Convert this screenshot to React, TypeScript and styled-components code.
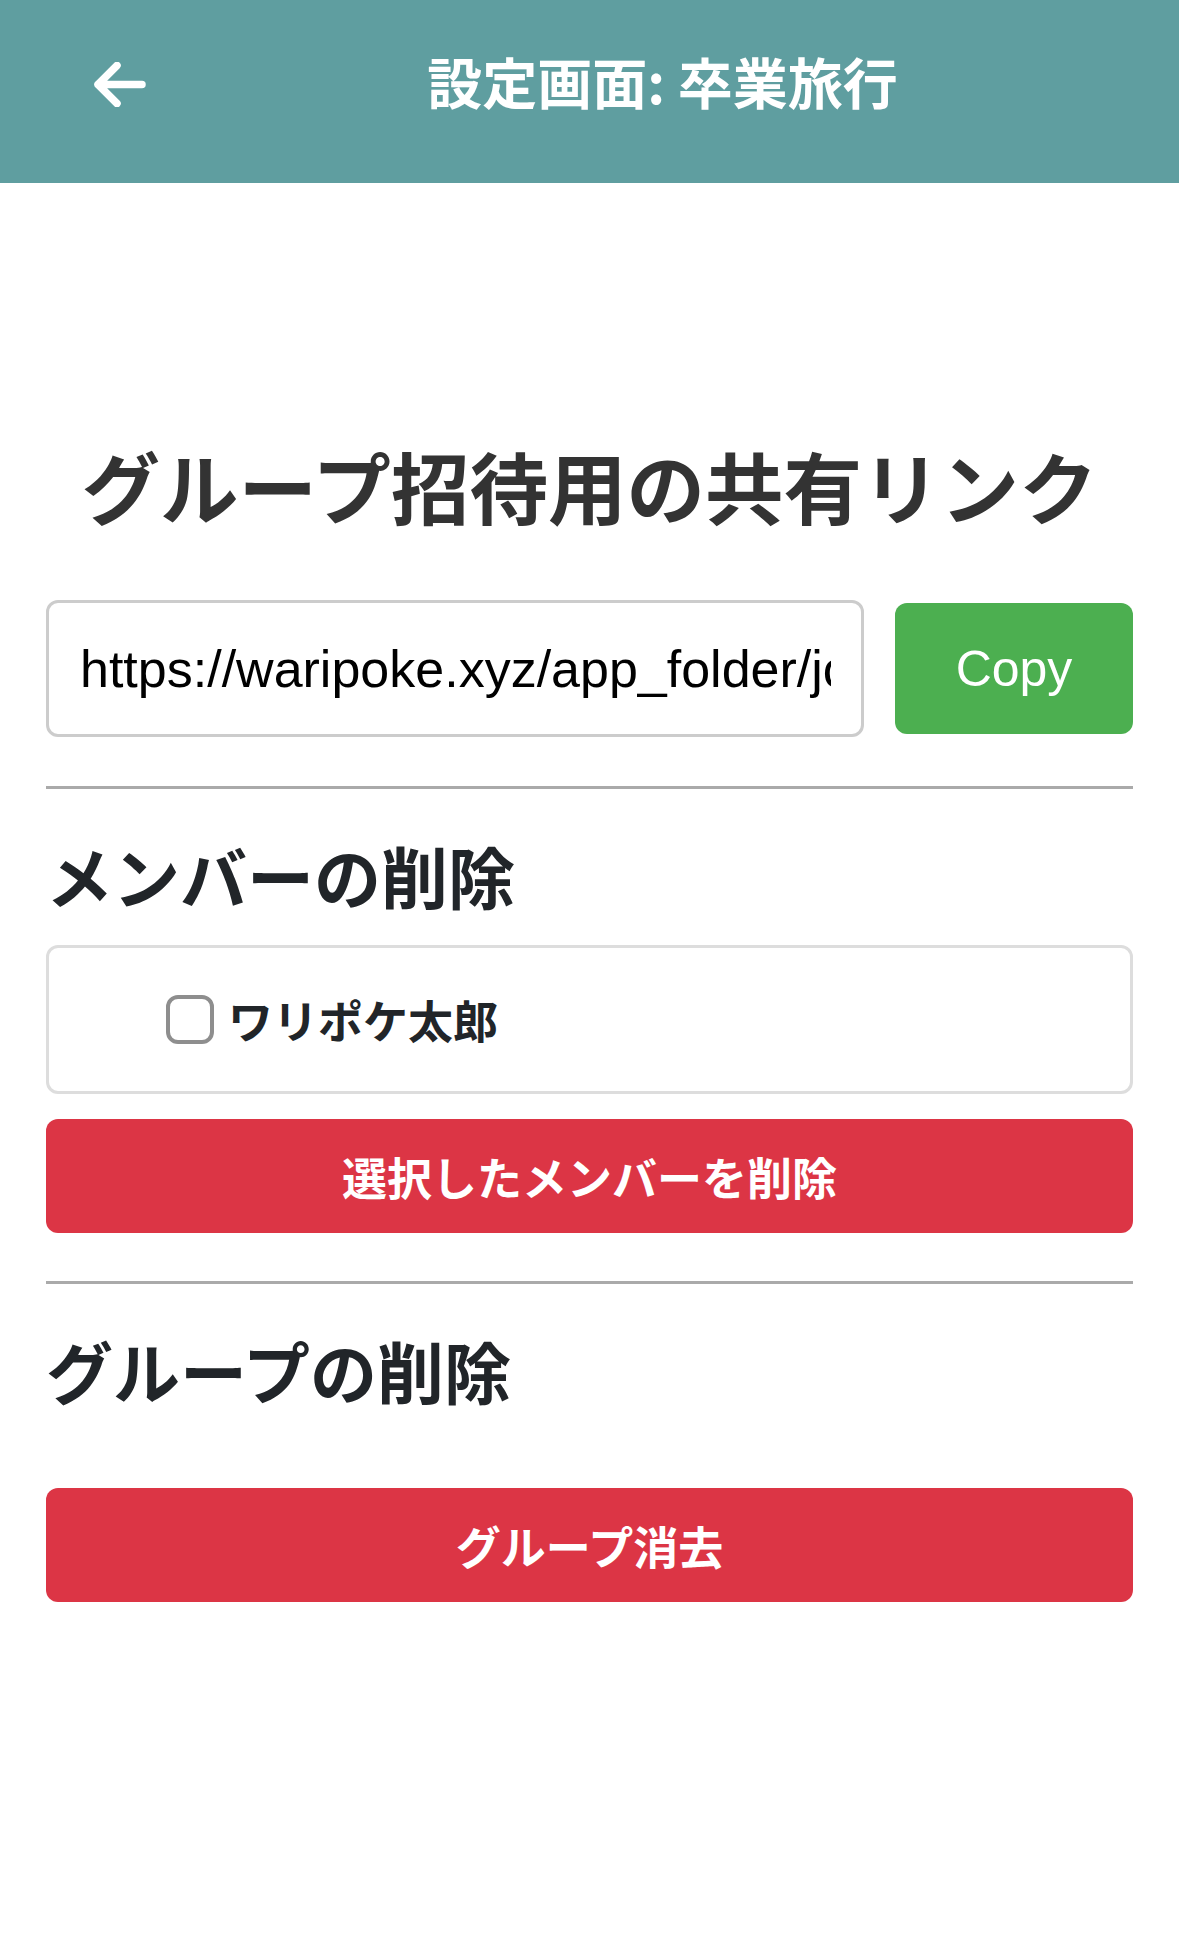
import React from "react";
import styled, { createGlobalStyle } from "styled-components";

const GlobalStyle = createGlobalStyle`
  html, body { margin: 0; padding: 0; background: #ffffff; }
  body {
    font-family: "Noto Sans CJK JP", "Noto Sans", sans-serif;
    color: #212529;
  }
  * { box-sizing: border-box; }
`;

const Header = styled.header`
  height: 183px;
  background: #5f9ea0;
  display: flex;
  align-items: center;
  padding-left: 93px;
`;

const BackButton = styled.button`
  background: none;
  border: none;
  padding: 0;
  width: 53px;
  height: 45px;
  display: flex;
  align-items: center;
  justify-content: center;
  cursor: pointer;
  margin-top: -14px;
`;

const HeaderTitle = styled.h1`
  flex: 1;
  margin: 0;
  text-align: center;
  color: #ffffff;
  font-size: 55px;
  font-weight: 700;
  line-height: 1.2;
  margin-top: -24px;
`;

const Main = styled.main`
  padding: 0 46px;
  display: flex;
  flex-direction: column;
`;

const PageHeading = styled.h2`
  margin: 255px 0 0;
  text-align: center;
  font-size: 78.5px;
  line-height: 94px;
  font-weight: 700;
  color: #333333;
  white-space: nowrap;
`;

const LinkRow = styled.div`
  margin-top: 68px;
  display: flex;
  align-items: center;
  gap: 31px;
`;

const LinkInput = styled.input`
  flex: 1;
  min-width: 0;
  height: 137px;
  border: 3px solid #cccccc;
  border-radius: 12px;
  padding: 0 30px 0 31px;
  font-family: "Liberation Sans", Arial, sans-serif;
  font-size: 52px;
  color: #000000;
  background: #ffffff;
  outline: none;
`;

const CopyButton = styled.button`
  width: 238px;
  height: 131px;
  border: none;
  border-radius: 12px;
  background: #4caf50;
  color: #ffffff;
  font-family: "Liberation Sans", Arial, sans-serif;
  font-size: 50px;
  cursor: pointer;
`;

const Divider = styled.hr<{ $top: number }>`
  margin: ${(p) => p.$top}px 0 0;
  border: none;
  height: 3px;
  background: #aaaaaa;
`;

const SectionHeading = styled.h3`
  margin: 46px 0 0;
  font-size: 67px;
  line-height: 79px;
  font-weight: 700;
  color: #212529;
`;

const MemberBox = styled.div`
  margin-top: 31px;
  height: 149px;
  border: 3px solid #dddddd;
  border-radius: 12px;
  display: flex;
  align-items: center;
  padding-left: 117px;
`;

const MemberLabel = styled.label`
  display: flex;
  align-items: center;
  gap: 14px;
  font-size: 45px;
  font-weight: 700;
  color: #212529;
  cursor: pointer;
`;

const CheckBox = styled.input`
  appearance: none;
  margin: 0;
  width: 48px;
  height: 49px;
  border: 4px solid #8e8e8e;
  border-radius: 12px;
  background: #ffffff;
`;

const DangerButton = styled.button<{ $top: number }>`
  margin-top: ${(p) => p.$top}px;
  height: 114px;
  width: 100%;
  border: none;
  border-radius: 12px;
  background: #dc3545;
  color: #ffffff;
  font-family: "Noto Sans CJK JP", "Noto Sans", sans-serif;
  font-size: 45px;
  font-weight: 700;
  cursor: pointer;
`;

const ArrowIcon = () => (
  <svg width="53" height="45" viewBox="0 0 53 45" fill="none">
    <path
      d="M49 22.5H5M24 3.5L5 22.5L24 41.5"
      stroke="#ffffff"
      strokeWidth="7.5"
      strokeLinecap="round"
      strokeLinejoin="round"
    />
  </svg>
);

export default function App() {
  return (
    <>
      <GlobalStyle />
      <Header>
        <BackButton aria-label="戻る">
          <ArrowIcon />
        </BackButton>
        <HeaderTitle>設定画面: 卒業旅行</HeaderTitle>
      </Header>
      <Main>
        <PageHeading>グループ招待用の共有リンク</PageHeading>
        <LinkRow>
          <LinkInput readOnly value="https://waripoke.xyz/app_folder/join_group.php?token=abc123" />
          <CopyButton>Copy</CopyButton>
        </LinkRow>
        <Divider $top={49} />
        <SectionHeading>メンバーの削除</SectionHeading>
        <MemberBox>
          <MemberLabel>
            <CheckBox type="checkbox" />
            ワリポケ太郎
          </MemberLabel>
        </MemberBox>
        <DangerButton $top={25}>選択したメンバーを削除</DangerButton>
        <Divider $top={48} />
        <SectionHeading>グループの削除</SectionHeading>
        <DangerButton $top={79}>グループ消去</DangerButton>
      </Main>
    </>
  );
}
